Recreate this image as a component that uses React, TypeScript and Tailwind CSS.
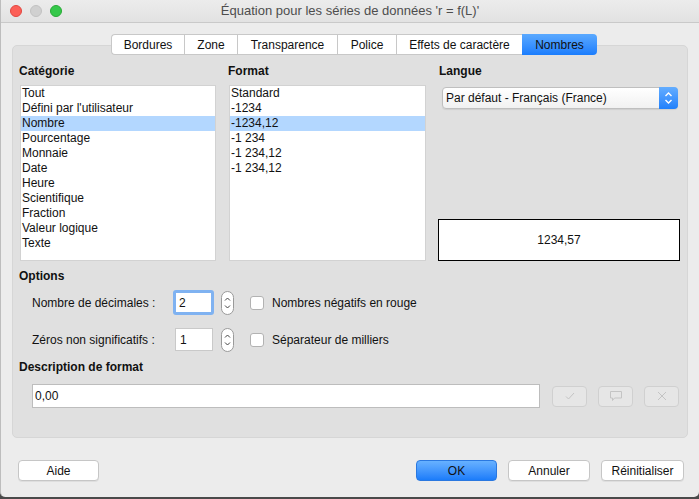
const font = { fontFamily: '"Liberation Sans", Arial, sans-serif' };

const categories = [
  'Tout',
  "Défini par l'utilisateur",
  'Nombre',
  'Pourcentage',
  'Monnaie',
  'Date',
  'Heure',
  'Scientifique',
  'Fraction',
  'Valeur logique',
  'Texte',
];

const formats = ['Standard', '-1234', '-1234,12', '-1 234', '-1 234,12', '-1 234,12'];

const tabs = [
  { label: 'Bordures', w: 'w-[73px]' },
  { label: 'Zone', w: 'w-[53px]' },
  { label: 'Transparence', w: 'w-[100px]' },
  { label: 'Police', w: 'w-[59px]' },
  { label: 'Effets de caractère', w: 'w-[126px]' },
  { label: 'Nombres', w: 'w-[75px]', active: true },
];

const ListBox = ({ items, selected }: { items: string[]; selected: number }) => (
  <div className="h-[176px] ml-[1px] bg-white border border-[#d2d2d2] text-[12px] text-[#111]">
    {items.map((item, i) => (
      <div
        key={i}
        className={`h-[15px] leading-[14px] pl-[1px] whitespace-nowrap ${i === selected ? 'bg-[#b3d7ff]' : ''}`}
      >
        {item}
      </div>
    ))}
  </div>
);

const Spinner = () => (
  <svg width="13" height="24" viewBox="0 0 13 24" className="shrink-0">
    <rect x="0.5" y="0.5" width="12" height="23" rx="6" fill="#fff" stroke="#9a9a9a" />
    <path d="M4 9.5 L6.5 7 L9 9.5" fill="none" stroke="#444" strokeWidth="1" />
    <path d="M4 14.5 L6.5 17 L9 14.5" fill="none" stroke="#444" strokeWidth="1" />
  </svg>
);

const Checkbox = ({ label }: { label: string }) => (
  <div className="flex items-center ml-[16px]">
    <div className="w-[14px] h-[14px] rounded-[3px] border border-[#b2b2b2] bg-white" />
    <span className="ml-[8px] text-[12px] text-[#111]">{label}</span>
  </div>
);

const SmallButton = ({ children }: { children: React.ReactNode }) => (
  <div className="w-[35px] h-[21px] rounded-[4px] border border-[#d0d0d0] bg-[#e6e6e6] flex items-center justify-center">
    {children}
  </div>
);

const Button = ({ label, w, primary }: { label: string; w: string; primary?: boolean }) => (
  <div
    className={`h-[21px] ${w} rounded-[4px] flex items-center justify-center text-[12px] text-[#111] ${
      primary
        ? 'bg-gradient-to-b from-[#67b1ff] to-[#1a7cfa] border border-[#2a78e0]'
        : 'bg-white border border-[#c6c6c6] shadow-[0_1px_0_rgba(0,0,0,0.06)]'
    }`}
  >
    {label}
  </div>
);

export default function App() {
  return (
    <div style={font} className="w-[699px] h-[499px] bg-[#4a4a4a] overflow-hidden">
      <div className="w-[699px] h-[497px] bg-[#ececec] rounded-b-[5px] border-l border-[#bdbdbd] flex flex-col">
        {/* title bar */}
        <div className="h-[23px] shrink-0 grid grid-cols-[80px_1fr_80px] items-center bg-gradient-to-b from-[#ececec] to-[#e2e2e2] border-b border-[#c9c9c9]">
          <div className="flex items-center gap-[8px] pl-[9px]">
            <div className="w-[12px] h-[12px] rounded-full bg-[#fc5f57] border border-[#e2463f]" />
            <div className="w-[12px] h-[12px] rounded-full bg-[#d0d0d0] border border-[#c2c2c2]" />
            <div className="w-[12px] h-[12px] rounded-full bg-[#35c84a] border border-[#27aa35]" />
          </div>
          <div className="text-center text-[13px] text-[#4d4d4d] whitespace-nowrap">
            Équation pour les séries de données 'r = f(L)'
          </div>
          <div />
        </div>

        {/* content */}
        <div className="px-[11px] pt-[11px] flex flex-col">
          <div className="relative z-10 flex ml-[99px] h-[21px]">
            {tabs.map((t, i) => (
              <div
                key={t.label}
                className={`${t.w} h-[21px] flex items-center justify-center text-[12px] text-[#111] ${
                  t.active
                    ? 'bg-gradient-to-b from-[#5aa9ff] to-[#1a7dfd] rounded-r-[4px]'
                    : 'bg-white border-y border-[#c8c8c8]'
                } ${i === 0 ? 'rounded-l-[4px] border-l' : ''} ${i > 0 && !t.active ? 'border-l' : ''}`}
              >
                {t.label}
              </div>
            ))}
          </div>

          <div className="-mt-[10px] h-[393px] bg-[#e0e0e0] border border-[#d6d6d6] rounded-[5px] pl-[6px] pt-[18px] flex flex-col">
            <div className="grid grid-cols-[197px_198px_242px] gap-x-[12px]">
              <div className="flex flex-col">
                <div className="text-[12px] font-bold text-[#111] h-[15px] leading-[15px] mb-[6px]">Catégorie</div>
                <ListBox items={categories} selected={2} />
              </div>
              <div className="flex flex-col">
                <div className="text-[12px] font-bold text-[#111] h-[15px] leading-[15px] mb-[6px]">Format</div>
                <ListBox items={formats} selected={2} />
              </div>
              <div className="flex flex-col">
                <div className="text-[12px] font-bold text-[#111] h-[15px] leading-[15px] pl-[1px] mb-[8px]">Langue</div>
                <div className="ml-[4px] w-[236px] h-[22px] flex rounded-[4px] border border-[#bfbfbf] bg-gradient-to-b from-white to-[#f1f1f1] shadow-[0_1px_1px_rgba(0,0,0,0.08)]">
                  <div className="flex-1 flex items-center pl-[3px] text-[12px] text-[#111] whitespace-nowrap">
                    Par défaut - Français (France)
                  </div>
                  <div className="w-[19px] -my-px -mr-px rounded-r-[4px] bg-gradient-to-b from-[#63adff] to-[#1f80fb] flex items-center justify-center">
                    <svg width="9" height="14" viewBox="0 0 9 14">
                      <path d="M1.5 5 L4.5 2 L7.5 5" fill="none" stroke="#fff" strokeWidth="1.4" />
                      <path d="M1.5 9 L4.5 12 L7.5 9" fill="none" stroke="#fff" strokeWidth="1.4" />
                    </svg>
                  </div>
                </div>
                <div className="mt-auto h-[42px] bg-white border border-black flex items-center justify-center text-[12px] text-[#111]">
                  1234,57
                </div>
              </div>
            </div>

            <div className="mt-[8px] text-[12px] font-bold text-[#111] h-[15px] leading-[15px]">Options</div>
            <div className="mt-[6px] flex flex-col gap-[12px] pl-[13px]">
              <div className="h-[25px] flex items-center">
                <div className="w-[141px] text-[12px] text-[#111]">Nombre de décimales :</div>
                <div className="w-[48px] shrink-0">
                  <div className="w-[41px] h-[25px] rounded-[3px] border-[3px] border-[#7fb2f1] bg-white flex items-center pl-[3px] text-[12px] text-[#111]">
                    2
                  </div>
                </div>
                <Spinner />
                <Checkbox label="Nombres négatifs en rouge" />
              </div>
              <div className="h-[25px] flex items-center">
                <div className="w-[141px] text-[12px] text-[#111]">Zéros non significatifs :</div>
                <div className="w-[48px] shrink-0 pl-[2px]">
                  <div className="w-[38px] h-[23px] border border-[#c9c9c9] bg-white flex items-center pl-[4px] text-[12px] text-[#111]">
                    1
                  </div>
                </div>
                <Spinner />
                <Checkbox label="Séparateur de milliers" />
              </div>
            </div>

            <div className="mt-[8px] text-[12px] font-bold text-[#111] h-[15px] leading-[15px]">Description de format</div>
            <div className="mt-[9px] flex items-center pl-[13px]">
              <div className="w-[508px] h-[24px] border border-[#bdbdbd] bg-white flex items-center pl-[2px] text-[12px] text-[#111]">
                0,00
              </div>
              <div className="flex gap-[11px] ml-[12px]">
                <SmallButton>
                  <svg width="12" height="10" viewBox="0 0 12 10">
                    <path d="M2 5.5 L4.5 8 L10 2" fill="none" stroke="#c4c4c4" strokeWidth="1" />
                  </svg>
                </SmallButton>
                <SmallButton>
                  <svg width="14" height="12" viewBox="0 0 14 12">
                    <path d="M1.5 1.5 H12.5 V8 H5.5 L3.5 10.5 V8 H1.5 Z" fill="none" stroke="#c4c4c4" strokeWidth="1" />
                  </svg>
                </SmallButton>
                <SmallButton>
                  <svg width="12" height="12" viewBox="0 0 12 12">
                    <path d="M2 2 L10 10 M10 2 L2 10" fill="none" stroke="#c4c4c4" strokeWidth="1" />
                  </svg>
                </SmallButton>
              </div>
            </div>
          </div>

          {/* bottom buttons */}
          <div className="mt-[22px] flex items-center pl-[6px]">
            <Button label="Aide" w="w-[81px]" />
            <div className="ml-[317px] flex gap-[11px]">
              <Button label="OK" w="w-[81px]" primary />
              <Button label="Annuler" w="w-[82px]" />
              <Button label="Réinitialiser" w="w-[83px]" />
            </div>
          </div>
        </div>
      </div>
    </div>
  );
}
